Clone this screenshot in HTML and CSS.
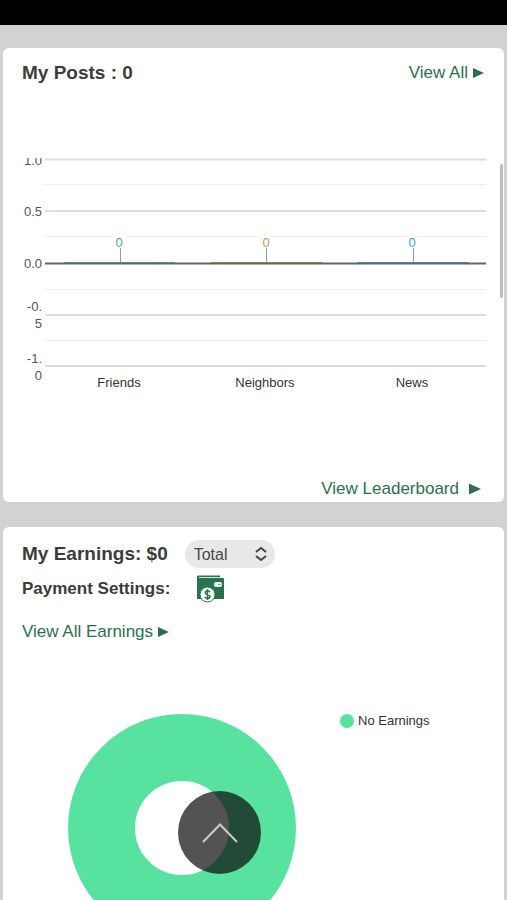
FILE: index.html
```html
<!DOCTYPE html>
<html lang="en">
<head>
<meta charset="utf-8">
<meta name="viewport" content="width=device-width, initial-scale=1">
<title>Dashboard</title>
<link rel="stylesheet" href="styles.css">
</head>
<body>
<div class="screen">
  <header class="status-bar"></header>
  <main class="cards">
    <section class="card posts">
      <div class="card-head">
        <h2 class="title">My Posts : 0</h2>
        <a class="link" href="#posts">View All<svg class="arrow" viewBox="0 0 11 10" aria-hidden="true"><path d="M0 0L11 5L0 10Z"/></svg></a>
      </div>
      <svg class="chart" viewBox="0 0 464 240" role="img" aria-label="Posts by audience">
        <g class="grid-minor">
          <path d="M22 26.500H464M22 78.500H464M22 131.500H464M22 182.500H464"/>
        </g>
        <g class="grid-major">
          <path d="M23 1.500H464M23 53H464M23 157H464M23 208H464"/>
        </g>
        <g class="stems"><path d="M98.500 90V105M244.500 90V105M391.500 90V105"/></g>
        <path class="baseline" d="M23 105.500H464"/>
        <path class="bar friends" d="M42 104.500H153"/>
        <path class="bar neighbors" d="M189 104.500H300"/>
        <path class="bar news" d="M335 104.500H447"/>
        <g class="axis">
          <text x="20" y="7">1.0</text>
          <text x="20" y="58">0.5</text>
          <text x="20" y="110">0.0</text>
          <text x="20" y="153">-0.</text>
          <text x="20" y="170">5</text>
          <text x="20" y="205">-1.</text>
          <text x="20" y="222">0</text>
        </g>
        <g class="values">
          <rect x="92" y="76" width="11" height="13"/>
          <rect x="239" y="76" width="11" height="13"/>
          <rect x="385" y="76" width="11" height="13"/>
          <text class="friends" x="97" y="89">0</text>
          <text class="neighbors" x="244" y="89">0</text>
          <text class="news" x="390" y="89">0</text>
        </g>
        <g class="names">
          <text x="97" y="229">Friends</text>
          <text x="243" y="229">Neighbors</text>
          <text x="390" y="229">News</text>
        </g>
      </svg>
      <a class="link leaderboard" href="#leaderboard">View Leaderboard<svg class="arrow" viewBox="0 0 11 10" aria-hidden="true"><path d="M0 0L11 5L0 10Z"/></svg></a>
    </section>

    <section class="card earnings">
      <div class="earnings-head">
        <h2 class="title"><label for="period">My Earnings: $0</label></h2>
        <div class="picker">
          <select id="period"><option>Total</option></select>
          <svg class="chevrons" viewBox="0 0 12 14" aria-hidden="true"><path d="M1 5L6 1L11 5M1 9L6 13L11 9"/></svg>
        </div>
      </div>
      <div class="payment">
        <h3 class="subtitle">Payment Settings:</h3>
        <button class="wallet" type="button" aria-label="Payment settings">
          <svg viewBox="0 0 28 28" aria-hidden="true">
            <path class="wallet-body" d="M2 .5H24V3H27Q28 3 28 4V24H1V2Q1 .5 2 .5Z"/>
            <path class="wallet-slot" d="M3 2.500H24"/>
            <rect class="wallet-clasp" x="18" y="7" width="8" height="5" rx="2"/>
            <path class="wallet-dot" d="M22 9.500H25"/>
            <circle class="coin" cx="11.500" cy="19.500" r="7.500"/>
            <path class="coin-sign" d="M14 17.300C13.500 15.800 9.500 15.500 9.200 17.600C9 20.100 14 18.900 14 21.600C13.800 24 9.300 23.600 9 21.800M11.500 14V25"/>
          </svg>
        </button>
      </div>
      <a class="link all-earnings" href="#earnings">View All Earnings<svg class="arrow" viewBox="0 0 11 10" aria-hidden="true"><path d="M0 0L11 5L0 10Z"/></svg></a>
      <div class="donut-row">
        <svg class="donut" viewBox="0 0 228 228" role="img" aria-label="No Earnings"><circle cx="114" cy="114" r="80.500"/></svg>
        <div class="legend"><span class="dot"></span>No Earnings</div>
      </div>
    </section>
  </main>
  <div class="scroll-thumb"></div>
  <button class="to-top" type="button" aria-label="Back to top">
    <svg viewBox="0 0 36 20" aria-hidden="true"><path d="M1 19L18 1.500L35 19"/></svg>
  </button>
</div>
</body>
</html>
```
FILE: styles.css
```css
* {
  box-sizing: border-box;
}

body {
  margin: 0;
  background: #d2d2d2;
  color: #3c3c3c;
  font-family: "Liberation Sans", Arial, sans-serif;
}

.screen {
  position: relative;
  height: 100vh;
  overflow: hidden;
}

.status-bar {
  height: 25px;
  background: #000;
}

.cards {
  display: flex;
  flex-direction: column;
  gap: 25px;
  padding: 23px 3px;
}

.card {
  display: flex;
  flex-direction: column;
  border-radius: 6px;
  background: #fff;
  padding: 12px 18px 0 19px;
}

.posts {
  padding-bottom: 1px;
}

.card-head,
.earnings-head,
.payment {
  display: flex;
  align-items: center;
}

.card-head {
  justify-content: space-between;
  padding-right: 2px;
}

.title,
.subtitle {
  margin: 0;
  font-weight: bold;
}

.title {
  font-size: 19px;
  line-height: 26px;
}

.subtitle {
  font-size: 17px;
  line-height: 28px;
}

.link {
  display: inline-flex;
  align-items: center;
  gap: 5px;
  color: #2a7050;
  font-size: 17px;
  line-height: 24px;
  text-decoration: none;
}

.arrow {
  width: 11px;
  height: 10px;
  fill: #2a7050;
}

.chart {
  display: block;
  width: 100%;
  margin-top: 72px;
}

.chart path {
  fill: none;
}

.grid-minor {
  stroke: #eee;
}

.grid-major {
  stroke: #dedede;
  stroke-width: 2;
}

.stems {
  stroke: #999;
}

.baseline {
  stroke: #606568;
  stroke-width: 2;
}

.bar.friends {
  stroke: #4a9a80;
}

.bar.neighbors {
  stroke: #9c8040;
}

.bar.news {
  stroke: #2f90b0;
}

.axis {
  fill: #555;
  font-size: 13px;
  text-anchor: end;
}

.values {
  font-size: 13px;
  text-anchor: middle;
}

.values rect {
  fill: #fff;
}

.values .friends {
  fill: #4aa98a;
}

.values .neighbors {
  fill: #b99a48;
}

.values .news {
  fill: #3b9fc6;
}

.names {
  fill: #333;
  font-size: 13px;
  text-anchor: middle;
}

.leaderboard {
  align-self: flex-end;
  gap: 10px;
  margin-top: 79px;
  padding-right: 5px;
}

.leaderboard .arrow {
  width: 12px;
  height: 12px;
}

.earnings-head {
  gap: 17px;
}

.earnings {
  padding-top: 13px;
}

.picker {
  position: relative;
  display: flex;
}

.picker select {
  appearance: none;
  width: 90px;
  height: 28px;
  border: 0;
  border-radius: 14px;
  padding: 0 30px 0 9px;
  background: #e8e8e8;
  color: #4a4a4a;
  font: 16px "Liberation Sans", Arial, sans-serif;
}

.chevrons {
  position: absolute;
  top: 7px;
  right: 8px;
  width: 12px;
  height: 14px;
  fill: none;
  stroke: #444;
  stroke-width: 2;
  pointer-events: none;
}

.payment {
  gap: 26px;
  margin-top: 7px;
}

.wallet {
  width: 28px;
  height: 28px;
  border: 0;
  padding: 0;
  background: none;
}

.wallet svg {
  display: block;
}

.wallet-body {
  fill: #27734f;
}

.wallet-slot {
  stroke: #d4e5dc;
}

.wallet-clasp {
  fill: #e6f2eb;
}

.wallet-dot {
  stroke: #7cae95;
}

.coin {
  fill: #fff;
  stroke: #27734f;
}

.coin-sign {
  fill: none;
  stroke: #27734f;
  stroke-width: 1.5;
}

.all-earnings {
  align-self: flex-start;
  margin-top: 17px;
}

.donut-row {
  display: flex;
  align-items: flex-start;
  gap: 44px;
  margin-top: 70px;
  padding: 0 0 60px 46px;
}

.donut {
  flex: none;
  width: 228px;
  height: 228px;
  fill: none;
  stroke: #57e39f;
  stroke-width: 67;
}

.legend {
  display: flex;
  align-items: center;
  gap: 4px;
  color: #333;
  font-size: 13px;
  line-height: 14px;
  white-space: nowrap;
}

.dot {
  width: 14px;
  height: 14px;
  border-radius: 50%;
  background: #57e39f;
}

.scroll-thumb {
  position: absolute;
  top: 164px;
  right: 4px;
  width: 3px;
  height: 134px;
  border-radius: 2px;
  background: #bbb;
}

.to-top {
  position: absolute;
  bottom: 26px;
  left: 178px;
  display: flex;
  align-items: center;
  justify-content: center;
  width: 83px;
  height: 83px;
  border: 0;
  border-radius: 50%;
  padding: 0;
  background: rgba(10, 10, 10, 0.7);
}

.to-top svg {
  width: 36px;
  height: 20px;
  fill: none;
  stroke: #ccc;
  stroke-width: 2;
}
```
